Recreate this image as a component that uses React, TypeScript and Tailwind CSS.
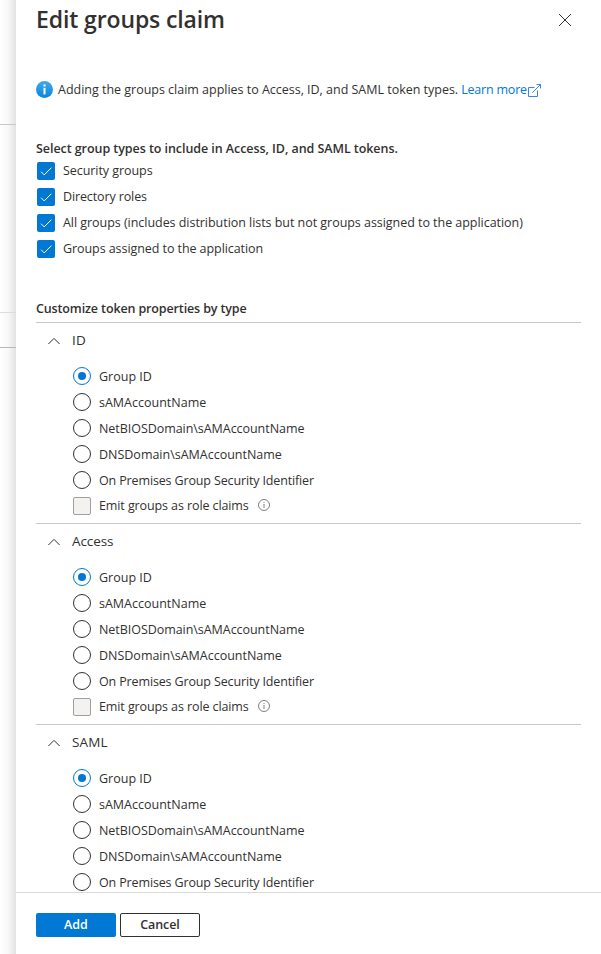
import React from "react";

const radioOptions = [
  { label: "Group ID", tracking: "tracking-[0px]" },
  { label: "sAMAccountName", tracking: "tracking-[0px]" },
  { label: "NetBIOSDomain\\sAMAccountName", tracking: "tracking-[-0.05px]" },
  { label: "DNSDomain\\sAMAccountName", tracking: "tracking-[-0.01px]" },
  { label: "On Premises Group Security Identifier", tracking: "tracking-[-0.14px]" },
];

const groupTypes = [
  { label: "Security groups", tracking: "tracking-[-0.06px]" },
  { label: "Directory roles", tracking: "tracking-[-0.12px]" },
  {
    label: "All groups (includes distribution lists but not groups assigned to the application)",
    tracking: "tracking-[-0.04px]",
  },
  { label: "Groups assigned to the application", tracking: "tracking-[-0.07px]" },
];

function Checked() {
  return (
    <span className="flex size-[18px] shrink-0 items-center justify-center rounded-[2px] bg-[#0078d4]">
      <svg width="18" height="18" viewBox="0 0 18 18" fill="none" stroke="white" strokeWidth="1">
        <path d="M4 9.7 7.2 12.9 14.4 5.7" />
      </svg>
    </span>
  );
}

function Radio({ selected }: { selected: boolean }) {
  return (
    <span
      className={
        selected
          ? "flex size-[18px] shrink-0 items-center justify-center rounded-full border border-[#0078d4]"
          : "flex size-[18px] shrink-0 rounded-full border border-[#323130]"
      }
    >
      {selected && <span className="size-2 rounded-full bg-[#0078d4]" />}
    </span>
  );
}

function Section({ title, tracking, last = false }: { title: string; tracking: string; last?: boolean }) {
  return (
    <section className="h-[201px] border-t border-[#c8c8c8]">
      <div className="flex h-9 items-center pl-3">
        <svg width="12" height="12" viewBox="0 0 12 12" fill="none" stroke="#323130" strokeWidth="1">
          <path d="M0.4 9 6 3.4 11.6 9" />
        </svg>
        <span className={"ml-3 pb-0.5 text-[13.5px] " + tracking}>{title}</span>
      </div>
      <div className="flex flex-col gap-2 pt-2 pl-[37px]">
        {radioOptions.map((o, i) => (
          <label key={o.label} className="flex h-[18px] items-center gap-2">
            <Radio selected={i === 0} />
            <span className={"pt-0.5 " + o.tracking}>{o.label}</span>
          </label>
        ))}
        {!last && (
          <label className="flex h-[18px] items-center gap-2">
            <span className="size-[18px] shrink-0 rounded-[2px] border border-[#a19f9d] bg-[#f3f2f1]" />
            <span className="tracking-[-0.1px]">Emit groups as role claims</span>
            <svg className="mb-0.5 ml-[1.3px]" width="12" height="12" viewBox="0 0 12 12" fill="none" stroke="#605e5c" strokeWidth="0.8">
              <circle cx="6" cy="6" r="5.5" />
              <path d="M6 5v4M6 3v1" />
            </svg>
          </label>
        )}
      </div>
    </section>
  );
}

export default function App() {
  return (
    <div className="flex h-[954px] w-[601px] overflow-hidden bg-white font-['Open_Sans',sans-serif] text-[12.5px] whitespace-nowrap text-[#323130]">
      <aside className="flex w-4 shrink-0 flex-col bg-linear-to-r from-white via-[#f8f8f8] to-[#e2e2e2]">
        <div className="h-[125px] border-b border-[#c8c8c8]" />
        <div className="h-[188px] border-b border-[#dcdcdc]" />
        <div className="h-[35px] border-b border-[#b8b8b8]" />
      </aside>
      <main className="flex min-w-0 flex-1 flex-col">
        <div className="h-[892px] overflow-hidden px-5">
          <header className="flex h-10 items-center justify-between pr-[9px]">
            <h1 className="pb-0.5 text-[23px] leading-[38px] font-semibold tracking-[-0.12px]">Edit groups claim</h1>
            <svg width="14" height="14" viewBox="0 0 14 14" fill="none" stroke="#323130" strokeWidth="1">
              <path d="M1 1 13 13M13 1 1 13" />
            </svg>
          </header>
          <div className="mt-10 flex h-[18px] items-center">
            <svg width="17" height="17" viewBox="0 0 17 17">
              <defs>
                <linearGradient id="info" x1="0" y1="0" x2="0" y2="1">
                  <stop offset="0" stopColor="#42a9ee" />
                  <stop offset="1" stopColor="#0785de" />
                </linearGradient>
              </defs>
              <circle cx="8.5" cy="8.5" r="8.5" fill="url(#info)" />
              <circle cx="8.5" cy="4.4" r="1.2" fill="white" />
              <rect x="7.5" y="6.8" width="2" height="6.6" fill="white" />
            </svg>
            <span className="ml-[5px] pt-0.5 tracking-[-0.015px]">
              Adding the groups claim applies to Access, ID, and SAML token types.
            </span>
            <a className="ml-[3px] pt-0.5 tracking-[-0.2px] text-[#0078d4]">Learn more</a>
            <svg className="mt-0.5 ml-[1.5px]" width="13" height="13" viewBox="0 0 13 13" fill="none" stroke="#3b82f0" strokeWidth="1">
              <path d="M6.5 3.5H.5v9h9V6.5M4.2 8.8 12.5.5M8.5.5h4v4" />
            </svg>
          </div>
          <h2 className="mt-[41px] h-[23px] leading-5 font-semibold tracking-[-0.06px]">
            Select group types to include in Access, ID, and SAML tokens.
          </h2>
          <div className="flex flex-col gap-2 pl-px">
            {groupTypes.map((g) => (
              <label key={g.label} className="flex h-[18px] items-center gap-2">
                <Checked />
                <span className={g.tracking}>{g.label}</span>
              </label>
            ))}
          </div>
          <h2 className="mt-[41px] h-[23px] leading-5 font-semibold tracking-[-0.13px]">
            Customize token properties by type
          </h2>
          <Section title="ID" tracking="tracking-[0.2px]" />
          <Section title="Access" tracking="tracking-[-0.1px]" />
          <Section title="SAML" tracking="tracking-[0.1px]" last />
        </div>
        <footer className="flex h-[62px] gap-1 border-t border-[#dadada] px-5 pt-5 font-semibold">
          <button className="h-6 w-20 rounded-[2px] bg-[#0078d4] text-white">Add</button>
          <button className="h-6 w-20 rounded-[2px] border border-[#323130] bg-white tracking-[-0.1px]">Cancel</button>
        </footer>
      </main>
    </div>
  );
}
